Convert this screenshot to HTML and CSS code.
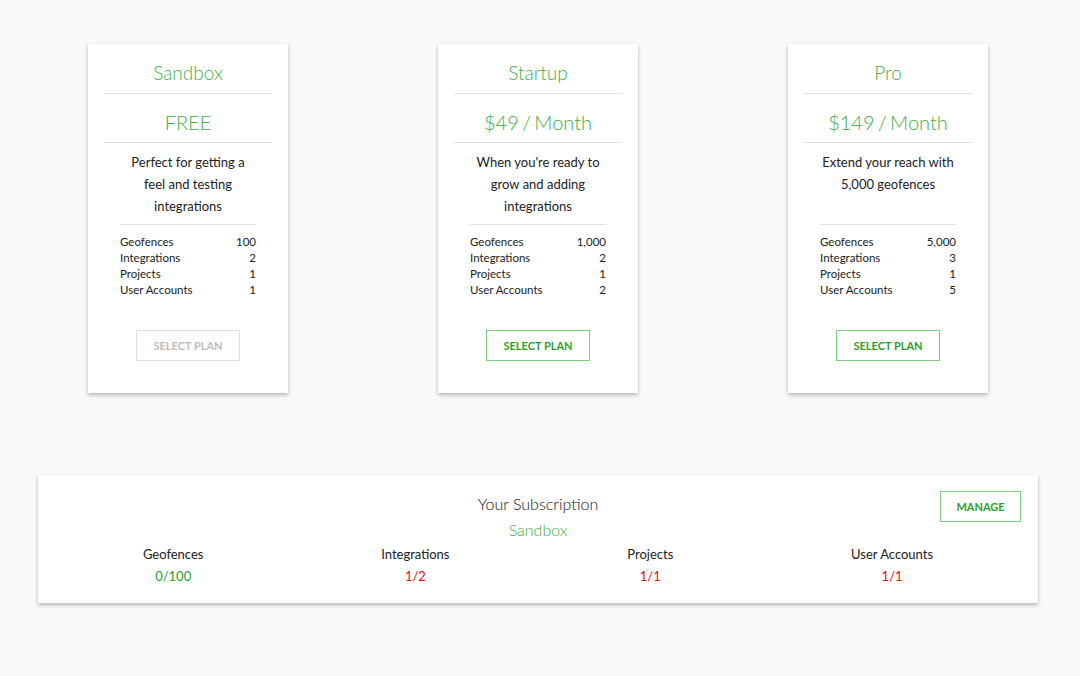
FILE: index.html
```html
<!DOCTYPE html>
<html>
<head>
<meta charset="utf-8">
<link rel="stylesheet" href="styles.css">
</head>
<body>
<div class="page">
  <div class="plans">
    <div class="card">
      <div class="title">Sandbox</div>
      <div class="price">FREE</div>
      <div class="desc">Perfect for getting a feel and testing integrations</div>
      <div class="features">
        <div class="row"><span>Geofences</span><span>100</span></div>
        <div class="row"><span>Integrations</span><span>2</span></div>
        <div class="row"><span>Projects</span><span>1</span></div>
        <div class="row"><span>User Accounts</span><span>1</span></div>
      </div>
      <div class="btn-wrap"><button class="btn disabled">SELECT PLAN</button></div>
    </div>
    <div class="card">
      <div class="title">Startup</div>
      <div class="price">$49 / Month</div>
      <div class="desc">When you're ready to grow and adding integrations</div>
      <div class="features">
        <div class="row"><span>Geofences</span><span>1,000</span></div>
        <div class="row"><span>Integrations</span><span>2</span></div>
        <div class="row"><span>Projects</span><span>1</span></div>
        <div class="row"><span>User Accounts</span><span>2</span></div>
      </div>
      <div class="btn-wrap"><button class="btn">SELECT PLAN</button></div>
    </div>
    <div class="card">
      <div class="title">Pro</div>
      <div class="price">$149 / Month</div>
      <div class="desc">Extend your reach with 5,000 geofences</div>
      <div class="features">
        <div class="row"><span>Geofences</span><span>5,000</span></div>
        <div class="row"><span>Integrations</span><span>3</span></div>
        <div class="row"><span>Projects</span><span>1</span></div>
        <div class="row"><span>User Accounts</span><span>5</span></div>
      </div>
      <div class="btn-wrap"><button class="btn">SELECT PLAN</button></div>
    </div>
  </div>
  <div class="sub">
    <button class="btn manage">MANAGE</button>
    <div class="sub-title">Your Subscription</div>
    <div class="sub-plan">Sandbox</div>
    <div class="usage">
      <div class="stat"><div class="label">Geofences</div><div class="val ok">0/100</div></div>
      <div class="stat"><div class="label">Integrations</div><div class="val full">1/2</div></div>
      <div class="stat"><div class="label">Projects</div><div class="val full">1/1</div></div>
      <div class="stat"><div class="label">User Accounts</div><div class="val full">1/1</div></div>
    </div>
  </div>
</div>
</body>
</html>
```

FILE: styles.css
```css
* { box-sizing: border-box; }
html, body { margin: 0; padding: 0; }
body {
  background: #f9f9f9;
  font-family: Lato, "Open Sans", sans-serif;
  color: #222;
  width: 1080px;
  height: 676px;
  overflow: hidden;
}
.page {
  width: 1000px;
  margin-left: 38px;
  padding-top: 44px;
}
.plans {
  display: flex;
  justify-content: center;
  gap: 150px;
}
.card {
  width: 200px;
  background: #fff;
  box-shadow: 0 2px 4px rgba(0,0,0,0.28);
  padding: 16px 16px 32px;
}
.title {
  text-align: center;
  font-weight: 300;
  font-size: 19px;
  line-height: 26px;
  color: #43ad47;
  padding-bottom: 7px;
  border-bottom: 1px solid #e2e2e2;
}
.price {
  text-align: center;
  font-weight: 300;
  font-size: 20px;
  line-height: 28px;
  word-spacing: -2px;
  color: #43ad47;
  padding: 14px 0 6px;
  border-bottom: 1px solid #e2e2e2;
}
.desc {
  margin: 8px 16px 0;
  height: 74px;
  text-align: center;
  font-size: 13px;
  line-height: 22px;
  border-bottom: 1px solid #e2e2e2;
}
.features {
  margin: 9px 16px 0;
  font-size: 11.5px;
  line-height: 16px;
}
.row {
  display: flex;
  justify-content: space-between;
}
.btn-wrap {
  display: flex;
  justify-content: center;
  margin-top: 32px;
}
.btn {
  font-family: Lato, "Open Sans", sans-serif;
  font-weight: 700;
  font-size: 11px;
  background: #fff;
  color: #2a9f2a;
  border: 1px solid #7fcb80;
  height: 31px;
  width: 104px;
  padding: 0;
  border-radius: 0;
}
.btn.disabled {
  color: #bdbdbd;
  border-color: #dedede;
}
.sub {
  position: relative;
  margin-top: 82px;
  background: #fff;
  box-shadow: 0 2px 4px rgba(0,0,0,0.28);
  height: 128px;
  padding: 18px 16px 0;
  text-align: center;
}
.manage {
  position: absolute;
  top: 16px;
  right: 17px;
  width: 81px;
  height: 31px;
}
.sub-title {
  font-weight: 300;
  font-size: 16px;
  line-height: 22px;
  color: #111;
}
.sub-plan {
  font-weight: 300;
  font-size: 16px;
  line-height: 22px;
  color: #43ad47;
  margin-top: 4px;
}
.usage {
  display: flex;
  justify-content: space-around;
  margin-top: 2px;
}
.label {
  font-size: 13px;
  line-height: 22px;
}
.val {
  font-size: 13px;
  line-height: 22px;
}
.val.ok { color: #2a9f2a; }
.val.full { color: #e01010; }
```
